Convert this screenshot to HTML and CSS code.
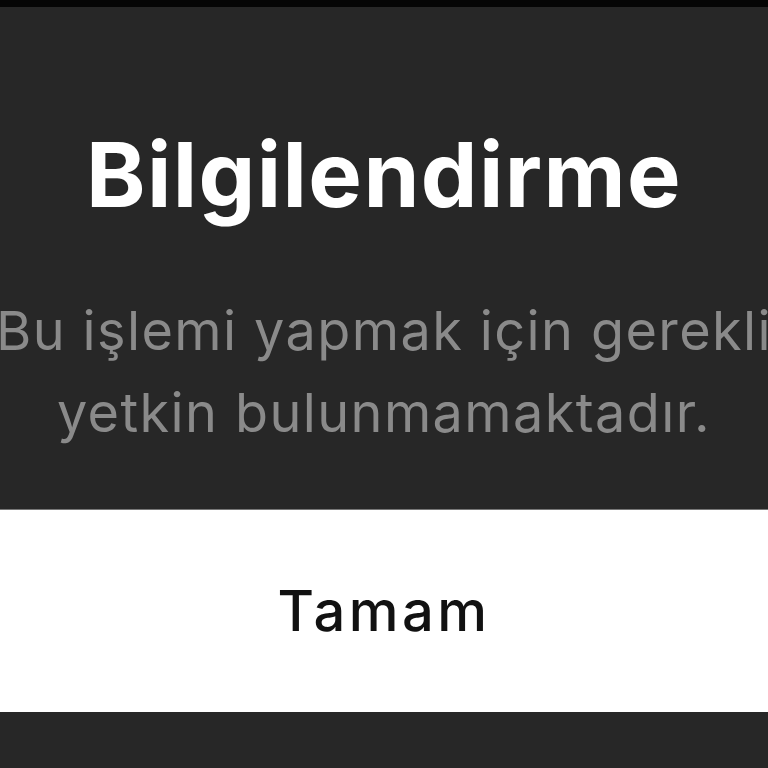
FILE: index.html
```html
<!DOCTYPE html>
<html lang="tr">
<head>
<meta charset="utf-8">
<link rel="stylesheet" href="styles.css">
</head>
<body>
<div class="topbar"></div>
<div class="dialog">
  <div class="content">
    <h1 class="title">Bilgilendirme</h1>
    <p class="message">Bu işlemi yapmak için gerekli<br>yetkin bulunmamaktadır.</p>
  </div>
  <div class="actions">
    <span class="btn">Tamam</span>
  </div>
</div>
</body>
</html>
```
FILE: styles.css
```css
html, body {
  margin: 0;
  padding: 0;
}
body {
  width: 768px;
  height: 768px;
  overflow: hidden;
  background: #272727;
  font-family: Inter, "Noto Sans", sans-serif;
}
.topbar {
  height: 7px;
  background: #050505;
}
.content {
  height: 502px;
  display: flex;
  flex-direction: column;
  align-items: center;
  box-sizing: border-box;
  padding-top: 118px;
}
.title {
  margin: 0;
  font-size: 90px;
  font-weight: 700;
  line-height: 100px;
  color: #ffffff;
  letter-spacing: 1.4px;
  white-space: nowrap;
}
.message {
  margin: 65px 0 0;
  width: 840px;
  text-align: center;
  font-size: 54px;
  line-height: 82px;
  font-weight: 400;
  color: #8a8a8a;
  letter-spacing: 1.4px;
  white-space: nowrap;
}
.actions {
  height: 203px;
  background: #ffffff;
  border-top: 1px solid #777;
  box-sizing: border-box;
  display: flex;
  align-items: center;
  justify-content: center;
}
.btn {
  font-size: 56px;
  font-weight: 500;
  color: #111111;
  letter-spacing: 3.5px;
}
```
